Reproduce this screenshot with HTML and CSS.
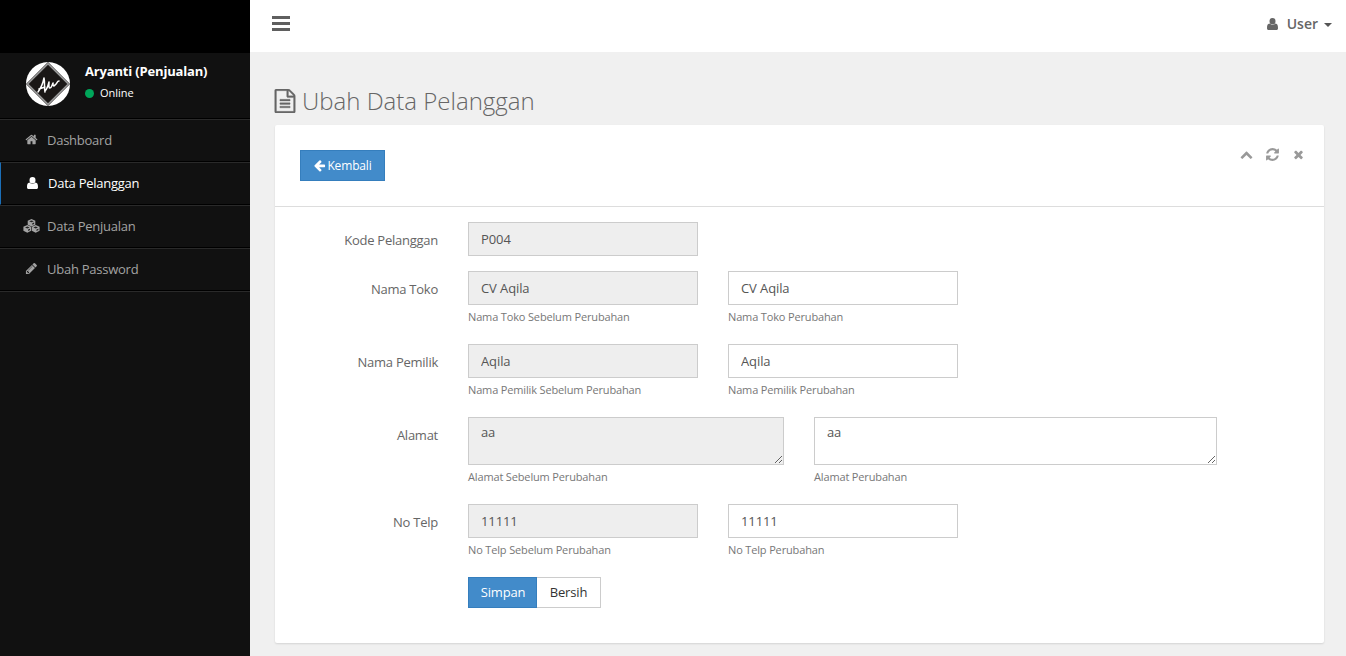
FILE: index.html
```html
<!DOCTYPE html>
<html lang="id">
<head>
<meta charset="utf-8">
<title>Ubah Data Pelanggan</title>
<link rel="stylesheet" href="styles.css">
</head>
<body>
<div class="app">
  <aside class="sidebar">
    <div class="brand"></div>
    <div class="profile">
      <svg class="avatar" viewBox="0 0 46 46">
        <circle cx="23" cy="23" r="22" fill="#fff"/>
        <path d="M23 1L45 23 23 45 1 23z" fill="#1a1716"/>
        <path d="M23 2.6L43.4 23 23 43.4 2.6 23z" fill="none" stroke="#999" stroke-width="1.600"/>
        <path d="M13 31c3-4 5-9 6-14 1 4 0 10 1 14M14 28l6-2M20 30c2-2 3-5 4-9 0 3-.5 6 1 6s2-3 3-5c0 3 .5 4 2 2 2-1 2-4 4-4" fill="none" stroke="#fff" stroke-width="1.500" stroke-linecap="round" stroke-linejoin="round"/>
      </svg>
      <div class="profile-info">
        <div class="profile-name">Aryanti (Penjualan)</div>
        <div class="profile-status"><span class="dot"></span>Online</div>
      </div>
    </div>
    <nav class="menu">
      <a class="menu-item"><span class="menu-icon"><svg class="fa" viewBox="0 0 1792 1792"><path d="M1472 992v480q0 26-19 45t-45 19h-384v-384h-256v384h-384q-26 0-45-19t-19-45v-480q0-1 .5-3t.5-3l575-474 575 474q1 2 1 6zm223-69l-62 74q-8 9-21 11h-3q-13 0-21-7l-692-577-692 577q-12 8-24 7-13-2-21-11l-62-74q-8-10-7-23.5t11-21.5l719-599q32-26 76-26t76 26l244 204v-195q0-14 9-23t23-9h192q14 0 23 9t9 23v408l219 182q10 8 11 21.5t-7 23.5z"/></svg></span>Dashboard</a>
      <a class="menu-item active"><span class="menu-icon"><svg class="person" viewBox="0 0 11 12"><path d="M5.500 0a3 3.300 0 0 1 3 3.300 3 3.300 0 0 1-6 0A3 3.300 0 0 1 5.500 0zM2.500 5.600c1.700 1.700 4.300 1.700 6 0C10.400 5.700 11 7.500 11 10.200 11 11.300 10.400 12 9.300 12H1.700C.6 12 0 11.300 0 10.200 0 7.500.6 5.700 2.500 5.600z"/></svg></span>Data Pelanggan</a>
      <a class="menu-item"><span class="menu-icon"><svg class="cubes" viewBox="0 0 17 14"><g fill="currentColor"><path d="M8.500 0L12.300 1.700V5.700L8.500 7.500 4.700 5.700V1.700z"/><path d="M4.300 6L8.200 7.700V11.800L4.300 13.700.4 11.800V7.700z"/><path d="M12.700 6L16.600 7.700V11.800L12.700 13.700 8.800 11.800V7.700z"/></g><path d="M6.200 2.300l2.300 1L10.800 2.300 8.500 1.400zM9.300 4.300v1.500l1.800-.9V3.600zM2 8.400l2.300 1 2.300-1-2.300-1zM5.100 10.500v1.500l1.900-.9V9.700zM10.400 8.400l2.300 1 2.300-1-2.300-1zM13.500 10.500v1.500l1.900-.9V9.700z" fill="#222"/></svg></span>Data Penjualan</a>
      <a class="menu-item"><span class="menu-icon"><svg class="fa" viewBox="0 0 1792 1792"><path d="M491 1536l91-91-235-235-91 91v107h128v128h107zm523-928q0-22-22-22-10 0-17 7l-542 542q-7 7-7 17 0 22 22 22 10 0 17-7l542-542q7-7 7-17zm-54-192l416 416-832 832h-416v-416zm683 96q0 53-37 90l-166 166-416-416 166-165q36-38 90-38 53 0 91 38l235 234q37 39 37 91z"/></svg></span>Ubah Password</a>
    </nav>
  </aside>
  <div class="main">
    <header class="topbar">
      <div class="toggle"><span></span><span></span><span></span></div>
      <div class="user-menu">
        <svg class="person user-icon" viewBox="0 0 11 12"><path d="M5.500 0a3 3.300 0 0 1 3 3.300 3 3.300 0 0 1-6 0A3 3.300 0 0 1 5.500 0zM2.500 5.600c1.700 1.700 4.300 1.700 6 0C10.400 5.700 11 7.500 11 10.200 11 11.300 10.400 12 9.300 12H1.700C.6 12 0 11.300 0 10.200 0 7.500.6 5.700 2.500 5.600z"/></svg>
        <span>User</span><i class="caret"></i>
      </div>
    </header>
    <main class="content">
      <h1 class="page-title"><svg class="fa title-icon" viewBox="0 0 1792 1792"><path d="M1596 380q28 28 48 76t20 88v1152q0 40-28 68t-68 28h-1344q-40 0-68-28t-28-68v-1600q0-40 28-68t68-28h896q40 0 88 20t76 48zm-444-244v376h376q-10-29-22-41l-313-313q-12-12-41-22zm384 1528v-1024h-416q-40 0-68-28t-28-68v-416h-768v1536h1280zm-1024-864q0-14 9-23t23-9h704q14 0 23 9t9 23v64q0 14-9 23t-23 9h-704q-14 0-23-9t-9-23v-64zm736 224q14 0 23 9t9 23v64q0 14-9 23t-23 9h-704q-14 0-23-9t-9-23v-64q0-14 9-23t23-9h704zm0 256q14 0 23 9t9 23v64q0 14-9 23t-23 9h-704q-14 0-23-9t-9-23v-64q0-14 9-23t23-9h704z"/></svg><span>Ubah Data Pelanggan</span></h1>
      <section class="card">
        <div class="card-head">
          <button class="btn primary back"><svg class="fa" viewBox="0 0 1792 1792"><path d="M1664 896v128q0 53-32.500 90.500t-84.500 37.500h-704l293 294q38 36 38 90t-38 90l-75 76q-37 37-90 37-52 0-91-37l-651-652q-37-37-37-90 0-52 37-91l651-650q38-38 91-38 52 0 90 38l75 74q38 38 38 91t-38 91l-293 293h704q52 0 84.500 37.500t32.500 90.500z"/></svg><span>Kembali</span></button>
          <div class="tools">
            <svg class="fa" viewBox="0 0 1792 1792"><path d="M1683 1331l-166 165q-19 19-45 19t-45-19l-531-531-531 531q-19 19-45 19t-45-19l-166-165q-19-19-19-45.500t19-45.500l742-741q19-19 45-19t45 19l742 741q19 19 19 45.500t-19 45.500z"/></svg>
            <svg class="fa refresh" viewBox="0 0 1792 1792"><path d="M1639 1056q0 5-1 7-64 268-268 434.500t-478 166.500q-146 0-282.500-55t-243.500-157l-129 129q-19 19-45 19t-45-19-19-45v-448q0-26 19-45t45-19h448q26 0 45 19t19 45-19 45l-137 137q71 66 161 102t187 36q134 0 250-65t186-179q11-17 53-117 8-23 30-23h192q13 0 22.500 9.500t9.500 22.500zm25-800v448q0 26-19 45t-45 19h-448q-26 0-45-19t-19-45 19-45l138-138q-148-137-349-137-134 0-250 65t-186 179q-11 17-53 117-8 23-30 23h-199q-13 0-22.500-9.500t-9.500-22.500v-7q65-268 270-434.500t480-166.500q146 0 284 55.500t245 156.500l130-129q19-19 45-19t45 19 19 45z"/></svg>
            <svg class="fa" viewBox="0 0 1792 1792"><path d="M1490 1322q0 40-28 68l-136 136q-28 28-68 28t-68-28l-294-294-294 294q-28 28-68 28t-68-28l-136-136q-28-28-28-68t28-68l294-294-294-294q-28-28-28-68t28-68l136-136q28-28 68-28t68 28l294 294 294-294q28-28 68-28t68 28l136 136q28 28 28 68t-28 68l-294 294 294 294q28 28 28 68z"/></svg>
          </div>
        </div>
        <form class="form">
          <div class="row">
            <label class="label">Kode Pelanggan</label>
            <div class="field"><input class="control" value="P004" readonly></div>
          </div>
          <div class="row">
            <label class="label">Nama Toko</label>
            <div class="field"><input class="control" value="CV Aqila" readonly><span class="help">Nama Toko Sebelum Perubahan</span></div>
            <div class="field"><input class="control" value="CV Aqila"><span class="help">Nama Toko Perubahan</span></div>
          </div>
          <div class="row">
            <label class="label">Nama Pemilik</label>
            <div class="field"><input class="control" value="Aqila" readonly><span class="help">Nama Pemilik Sebelum Perubahan</span></div>
            <div class="field"><input class="control" value="Aqila"><span class="help">Nama Pemilik Perubahan</span></div>
          </div>
          <div class="row">
            <label class="label">Alamat</label>
            <div class="field medium"><textarea class="control area" readonly>aa</textarea><span class="help">Alamat Sebelum Perubahan</span></div>
            <div class="field wide"><textarea class="control area">aa</textarea><span class="help">Alamat Perubahan</span></div>
          </div>
          <div class="row">
            <label class="label">No Telp</label>
            <div class="field"><input class="control" value="11111" readonly><span class="help">No Telp Sebelum Perubahan</span></div>
            <div class="field"><input class="control" value="11111"><span class="help">No Telp Perubahan</span></div>
          </div>
          <div class="actions">
            <button type="button" class="btn primary save">Simpan</button><button type="button" class="btn plain">Bersih</button>
          </div>
        </form>
      </section>
    </main>
  </div>
</div>
</body>
</html>
```
FILE: styles.css
```css
* { box-sizing: border-box; }
body {
  margin: 0;
  font: 13px/20px "Open Sans", sans-serif;
  color: #5f6468;
  background: #f0f0f0;
}
.app { display: flex; height: 656px; overflow: hidden; }
.fa { width: 13px; height: 13px; fill: currentColor; flex: none; display: block; }
.person { width: 11px; height: 12px; fill: currentColor; flex: none; display: block; }

.sidebar { width: 250px; flex: none; background: #111; }
.brand { height: 53px; background: #000; }
.profile { display: flex; height: 66px; padding: 8px 0 0 25px; border-bottom: 1px solid #000; }
.avatar { width: 46px; height: 46px; flex: none; }
.profile-info { padding-left: 14px; color: #fff; }
.profile-name { font-weight: 700; letter-spacing: -0.17px; line-height: 21px; white-space: nowrap; }
.profile-status { display: flex; align-items: center; font-size: 11px; line-height: 22px; }
.dot { width: 9px; height: 9px; border-radius: 50%; background: #00a65a; margin-right: 6px; }
.menu { border-bottom: 1px solid #2a2a2a; }
.menu-item {
  display: flex;
  align-items: center;
  height: 43px;
  padding: 0 0 2px 21px;
  letter-spacing: -0.25px;
  border-top: 1px solid #2a2a2a;
  border-bottom: 1px solid #000;
  color: #a3a3a3;
}
.menu-item.active { color: #fff; border-left: 1px solid #1b6fb8; }
.menu-icon { width: 20px; margin-right: 6px; display: flex; justify-content: center; }
.cubes { width: 17px; height: 14px; display: block; }

.main { flex: 1; min-width: 0; }
.topbar { height: 53px; background: #fff; display: flex; justify-content: space-between; padding: 16px 14px 0 22px; border-bottom: 1px solid #f0f0f0; }
.toggle { width: 18px; display: flex; flex-direction: column; gap: 3px; }
.toggle span { height: 3px; background: #5f5f5f; }
.user-menu { display: flex; align-items: center; height: 16px; font-size: 14px; font-weight: 600; color: #666; }
.user-icon { margin-right: 9px; }
.caret { margin-left: 6px; margin-top: 2px; border: 4px solid transparent; border-top-color: #555; border-bottom: 0; }
.content { padding: 31px 22px 0 25px; }
.page-title { margin: 0; height: 41px; display: flex; align-items: flex-start; font-size: 24px; line-height: 34px; font-weight: 300; color: #666; }
.title-icon { width: 24px; height: 24px; margin: 5px 5px 0 -2px; stroke: currentColor; stroke-width: 24; }

.card { height: 518px; background: #fff; border-radius: 2px; box-shadow: 0 1px 2px rgba(0,0,0,.12); }
.card-head { height: 82px; padding: 25px 19px 0 25px; border-bottom: 1px solid #ddd; display: flex; justify-content: space-between; align-items: flex-start; }
.tools { display: flex; align-items: center; gap: 12px; margin-top: -3px; color: #999; }
.refresh { width: 15px; height: 15px; }
.btn { height: 31px; border: 1px solid #ccc; border-radius: 0; padding: 0 12px 1px; font: 13px "Open Sans", sans-serif; letter-spacing: -0.15px; display: flex; align-items: center; justify-content: center; }
.primary { background: #428bca; border-color: #357ebd; color: #fff; }
.plain { background: #fff; color: #333; border-left: 0; width: 64px; }
.back { width: 85px; padding-bottom: 0; font-size: 12px; gap: 1px; }
.save { width: 69px; padding-left: 13px; }
.form { padding-top: 15px; }
.row { display: flex; align-items: flex-start; gap: 30px; margin-bottom: 15px; }
.label { width: 163px; padding-top: 8px; text-align: right; letter-spacing: -0.25px; color: #666; }
.field { width: 230px; flex: none; }
.medium { width: 316px; }
.wide { width: 403px; }
.control { display: block; width: 100%; height: 34px; padding: 6px 12px; border: 1px solid #ccc; border-radius: 0; background: #fff; color: #555; font: 13px/20px "Open Sans", sans-serif; letter-spacing: -0.1px; outline: 0; }
.control:read-only { background: #eee; }
.area { height: 48px; padding-top: 4px; resize: both; overflow: hidden; }
.help { display: block; height: 20px; margin-top: 4px; font-size: 11px; line-height: 15px; letter-spacing: -0.15px; color: #777; }
.actions { display: flex; margin-left: 193px; }
```
